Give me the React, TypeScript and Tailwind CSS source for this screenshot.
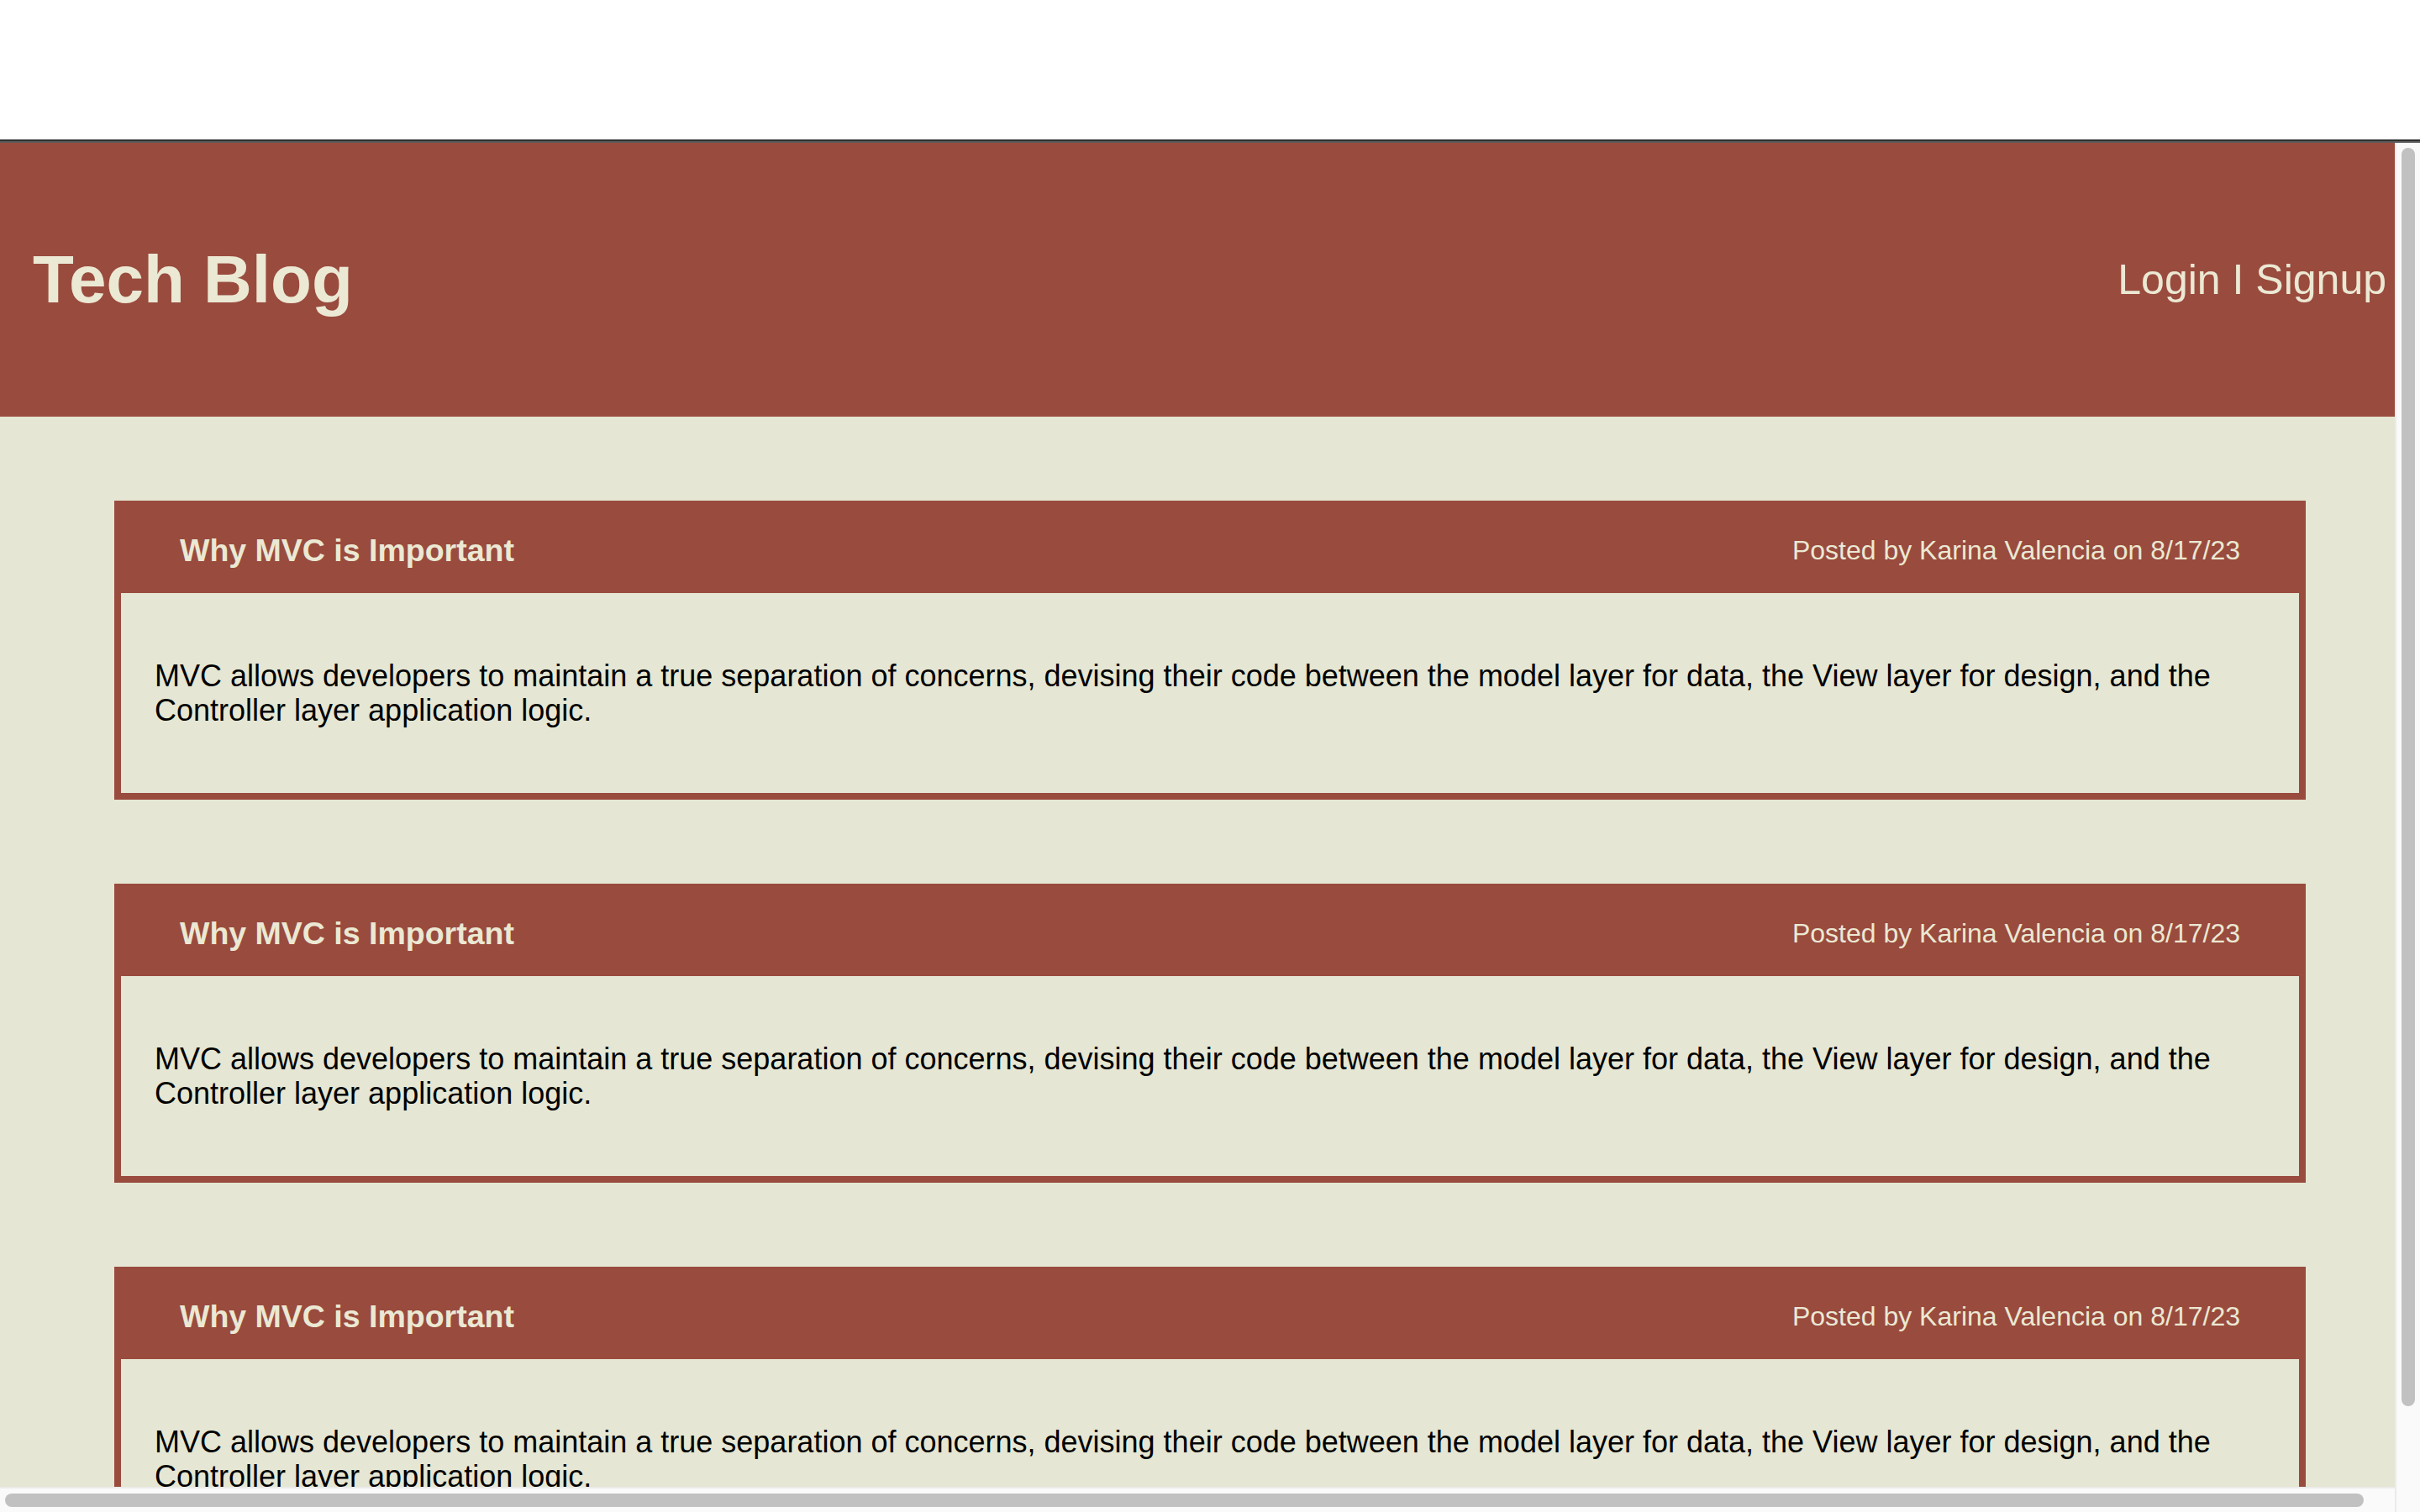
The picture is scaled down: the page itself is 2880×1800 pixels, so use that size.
const posts = [1, 2, 3].map((id) => ({
  id,
  title: "Why MVC is Important",
  author: "Karina Valencia",
  date: "8/17/23",
  body: "MVC allows developers to maintain a true separation of concerns, devising their code between the model layer for data, the View layer for design, and the Controller layer application logic.",
}));

const PostCard = ({ post }: { post: (typeof posts)[number] }) => {
  return (
    <div className="w-[2608px] mb-[100px] border-8 border-[#994b3e]">
      <div className="h-[102px] bg-[#994b3e] flex items-center justify-between px-[70px] text-[#ebe8d3]">
        <h2 className="text-[37.5px] font-bold">{post.title}</h2>
        <span className="text-[32px]">
          Posted by {post.author} on {post.date}
        </span>
      </div>
      <div className="py-[78px] pl-[40px] pr-[40px]">
        <p className="text-[36px] leading-[41px] text-black">{post.body}</p>
      </div>
    </div>
  );
};

export default function App() {
  return (
    <div
      className="w-[2880px] h-[1800px] flex flex-col bg-white overflow-hidden"
      style={{ fontFamily: '"Liberation Sans", Arial, sans-serif' }}
    >
      {/* blank strip above the page */}
      <div className="h-[166px] shrink-0 bg-white" />
      <div className="h-[2px] shrink-0 bg-[#2f2f2f]" />
      <div className="h-[2px] shrink-0 bg-[#5a5a5a]" />

      <div className="flex flex-1 min-h-0">
        <div className="flex flex-col flex-1 min-w-0">
          {/* page */}
          <div className="flex-1 min-h-0 overflow-hidden bg-[#e5e6d3]">
            <header className="h-[326px] bg-[#994b3e] flex items-center justify-between pl-[39px] pr-[10px] text-[#ebe8d3]">
              <h1 className="text-[80px] font-bold">Tech Blog</h1>
              <nav className="text-[50px]">Login I Signup</nav>
            </header>
            <main className="pt-[100px] pl-[136px]">
              {posts.map((post) => (
                <PostCard key={post.id} post={post} />
              ))}
            </main>
          </div>

          {/* horizontal scrollbar */}
          <div className="h-[30px] shrink-0 bg-[#fafafa] border-t-2 border-[#ebebeb] flex items-center pl-[6px]">
            <div className="w-[2807px] h-[16px] rounded-full bg-[#c1c1c1]" />
          </div>
        </div>

        {/* vertical scrollbar */}
        <div className="w-[30px] shrink-0 bg-[#fafafa] border-l-2 border-[#ebebeb] flex justify-center pt-[6px]">
          <div className="w-[16px] h-[1498px] rounded-full bg-[#c1c1c1]" />
        </div>
      </div>
    </div>
  );
}
